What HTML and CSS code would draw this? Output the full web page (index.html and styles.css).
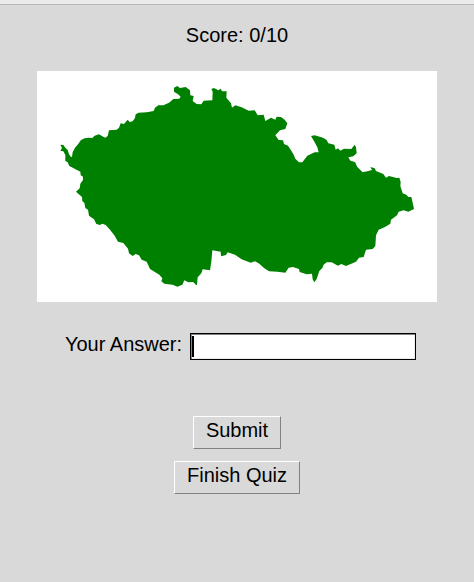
FILE: index.html
```html
<!DOCTYPE html>
<html lang="en">
<head>
<meta charset="utf-8">
<meta name="viewport" content="width=device-width, initial-scale=1">
<title>Country Quiz</title>
<link rel="stylesheet" href="styles.css">
</head>
<body>
<div class="titlebar-edge"></div>
<main class="quiz">
  <p class="score">Score: 0/10</p>
  <svg class="map" viewBox="111 213 1200 693" role="img" aria-label="Country outline">
    <path d="M181 434L190 435L196 443L203 450L207 463L213 471L216 470L218 457L225 443L234 433L243 420L254 415L266 413L277 414L284 407L297 403L307 409L316 413L323 408L327 391L350 389L357 383L362 370L372 372L383 359L389 366L398 364L405 354L407 343L416 338L440 337L461 333L465 323L475 316L490 316L507 308L520 297
    L538 296L542 290L534 283L522 275L522 263L532 258L540 264L557 261L570 271L571 286L581 288L578 303L590 312L604 313L611 302L637 301L638 275L634 267L642 264L655 271L662 266L666 274L680 274L679 293L693 310L696 323L706 316L725 322L746 332L764 331L773 346L791 344L796 363L813 353L826 359L830 350L843 351L854 359L862 370L856 387L840 391L826 406L836 420L849 421L852 432L864 437L873 451L881 464L886 476L897 487
    L907 487L922 467L944 457L956 457L952 442L944 427L933 408L944 406L969 413L980 420L985 430L1003 434L1007 449L1014 445L1021 452L1032 446L1054 447L1064 434L1068 442L1070 460L1060 469L1045 472L1051 482L1065 486L1072 501L1088 517L1105 513L1116 510L1111 501L1124 505L1128 513L1150 522L1158 533L1167 528L1190 534L1198 533L1202 546L1201 558L1208 580L1219 584L1225 591L1234 591L1238 608L1242 627
    L1225 635L1211 631L1196 635L1191 646L1173 659L1171 671L1155 681L1136 689L1128 706L1126 738L1118 747L1098 749L1091 771L1077 773L1068 785L1038 798L1024 792L1014 797L995 787L980 787L971 794L967 804L958 813L950 837L943 847L938 838L936 821L920 823L899 816
    L897 807L879 801L866 803L856 818L832 815L807 814L792 804L778 791L765 784L752 788L725 778L705 764L683 757L678 765L663 769L662 755L637 751L634 785L630 811L608 808L604 820L593 832L591 854L588 855L580 846L565 847L553 841L547 854L532 860L518 854L493 851L484 844L487 835L478 824
    L450 807L440 785L425 779L417 766L407 762L398 768L387 760L384 746L370 729L354 725L343 706L328 687L317 675L307 671L300 675L289 672L282 658L267 647L264 629L256 624L253 608L247 604L246 591L228 575L239 565L241 551L249 540L249 530L242 526L241 515L208 498L203 487L196 483L196 465L190 454L181 452L186 444Z"/>
  </svg>
  <form class="form">
    <div class="answer-row">
      <label for="answer">Your Answer:</label>
      <span class="field">
        <input id="answer" class="answer" type="text" autocomplete="off">
        <span class="caret" aria-hidden="true"></span>
      </span>
    </div>
    <button class="button" type="submit">Submit</button>
    <button class="button" type="button">Finish Quiz</button>
  </form>
</main>
</body>
</html>
```
FILE: styles.css
```css
* {
  box-sizing: border-box;
}

body {
  margin: 0;
  background: #d9d9d9;
  color: #000;
  font: 20px/23px "Liberation Sans", Arial, sans-serif;
}

.titlebar-edge {
  height: 5px;
  background: #ebebeb;
  border-bottom: 1px solid #b8b8b8;
}

.quiz {
  display: flex;
  flex-direction: column;
  align-items: center;
  padding: 19px 37px;
}

.score {
  margin: 0 0 24px;
}

.map {
  display: block;
  width: 100%;
  max-width: 400px;
  background: #fff;
  fill: #008000;
}

.form {
  display: flex;
  flex-direction: column;
  align-items: center;
  gap: 12px;
  width: 100%;
  margin-top: 31px;
}

.answer-row {
  display: flex;
  align-items: flex-start;
  gap: 8px;
  margin-bottom: 44px;
  padding-left: 7px;
}

.field {
  position: relative;
  display: flex;
}

.answer {
  width: 226px;
  height: 27px;
  padding: 0 2px;
  border: 1px solid #000;
  border-radius: 0;
  outline: 0;
  background: #fff;
  box-shadow: inset 1px 1px #828282, inset -1px -1px #ececec;
  color: inherit;
  font: inherit;
}

.caret {
  position: absolute;
  top: 3px;
  left: 2px;
  width: 2px;
  height: 21px;
  background: #000;
}

.button {
  padding: 2px 12px 6px;
  border: 1px solid;
  border-color: #fff #828282 #828282 #fff;
  border-radius: 0;
  background: #d9d9d9;
  color: inherit;
  font: inherit;
}
```
